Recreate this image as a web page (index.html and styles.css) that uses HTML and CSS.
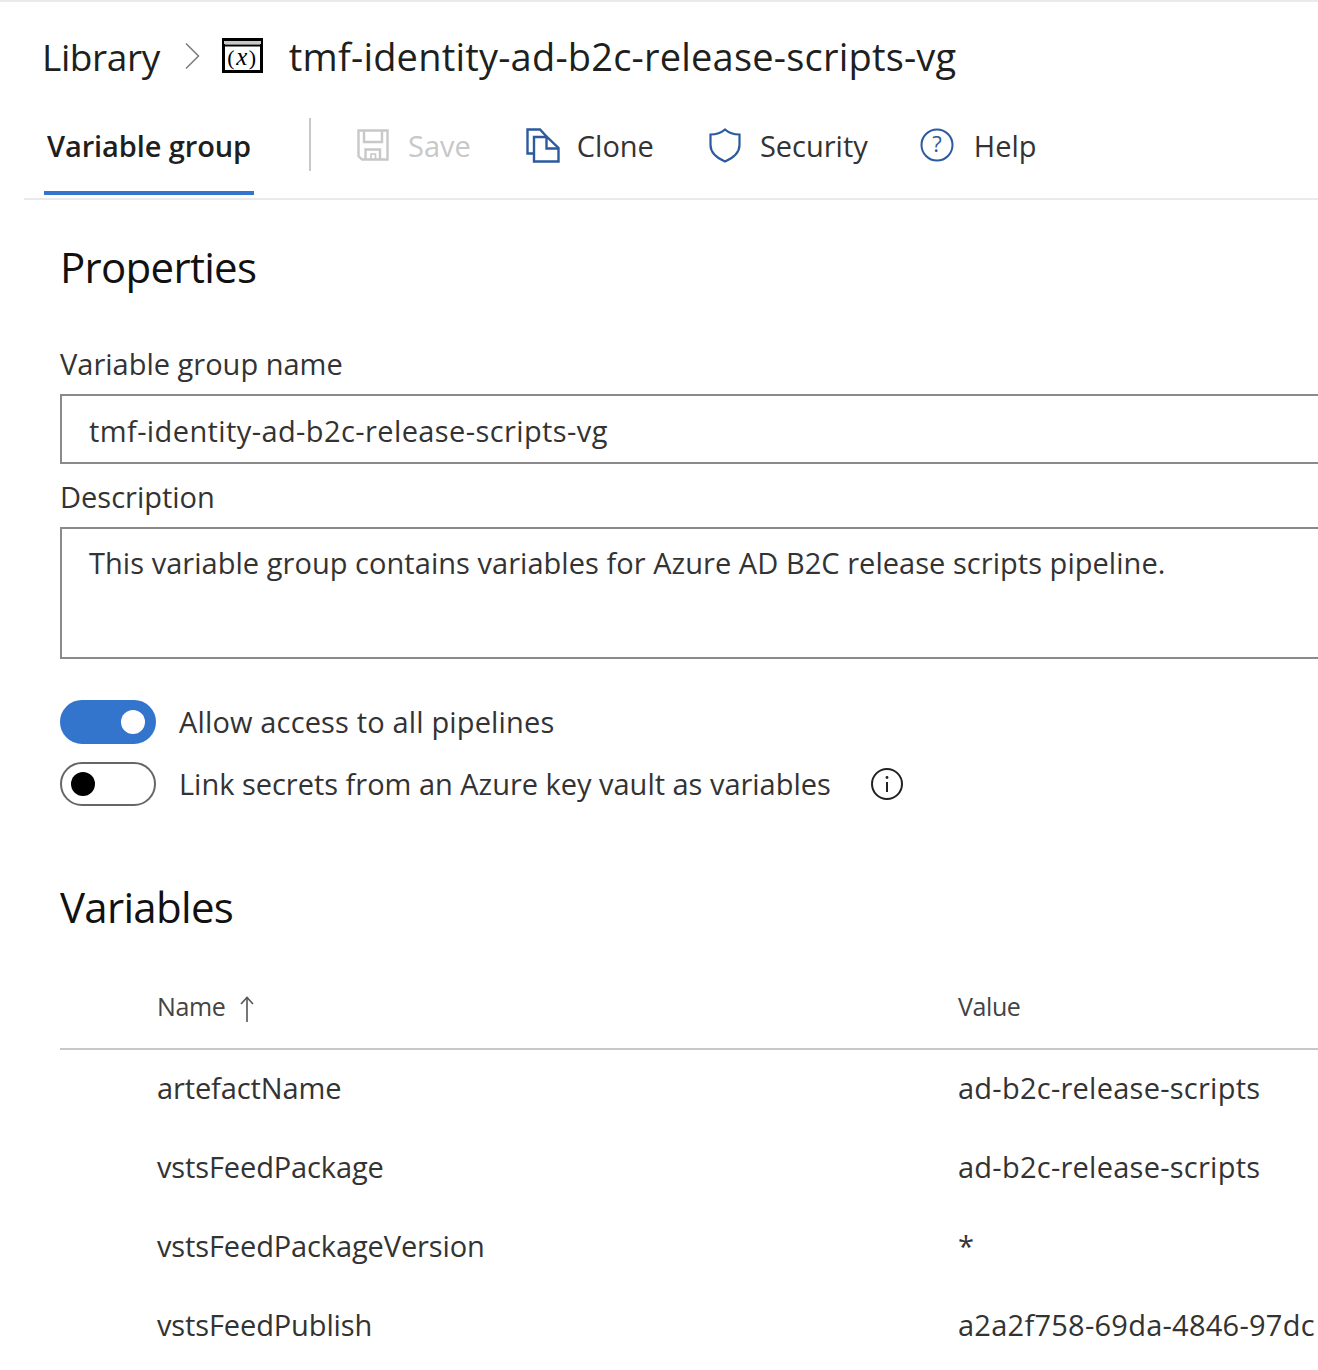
FILE: index.html
```html
<!DOCTYPE html>
<html lang="en">

<head>
    <meta charset="UTF-8">
    <title>tmf-identity-ad-b2c-release-scripts-vg</title>
    <link rel="stylesheet" href="styles.css">
</head>

<body>
    <!-- Breadcrumb -->
    <header class="breadcrumb">
        <span class="crumb-link">Library</span>
        <svg class="crumb-chevron" width="16" height="28" viewBox="0 0 16 28"><path d="M2 1.5 L14.5 14 L2 26.5" fill="none" stroke="#7a7a7a" stroke-width="1.5"/></svg>
        <svg class="crumb-icon" width="41" height="35" viewBox="0 0 41 35">
            <rect x="1.5" y="1.5" width="38" height="32" fill="#fff" stroke="#000" stroke-width="3"/>
            <path d="M2 4.5 H39" stroke="#c8c8c8" stroke-width="3"/>
            <path d="M2 7.5 H39" stroke="#000" stroke-width="2"/>
            <text x="20.5" y="27" text-anchor="middle" class="crumb-icon-text">(<tspan class="crumb-icon-x">x</tspan>)</text>
        </svg>
        <h1 class="crumb-title">tmf-identity-ad-b2c-release-scripts-vg</h1>
    </header>

    <!-- Tabs and commands -->
    <nav class="toolbar">
        <div class="tab">Variable group</div>
        <div class="toolbar-sep"></div>
        <div class="command command-save">
            <svg width="32" height="32" viewBox="0 0 32 32" fill="none" stroke="#c8c8c8" stroke-width="2.4"><path d="M1.5 1.5 H30.5 V30.5 H5 L1.5 27 Z"/><path d="M7 1.5 V13 H25 V1.5"/><path d="M8.5 30.5 V20.5 H23 V30.5"/><path d="M14 30.5 V25 H18.5 V30.5" stroke-width="1.6"/></svg>
            <span>Save</span>
        </div>
        <div class="command command-clone">
            <svg width="34" height="35" viewBox="0 0 34 35" fill="none" stroke="#2b5a9e" stroke-width="2.4"><path d="M8 25.5 H1.5 V1.5 H14 L21 9"/><path d="M8 33.5 V9 H21 L32.5 20 V33.5 Z"/><path d="M20.5 9 V20.5 H32.5"/></svg>
            <span>Clone</span>
        </div>
        <div class="command command-security">
            <svg width="32" height="35" viewBox="0 0 32 35" fill="none" stroke="#2b5a9e" stroke-width="2.2"><path d="M16 1.5 C20 5 25 6.5 30.5 6.5 V17 C30.5 25 24 30 16 33.5 C8 30 1.5 25 1.5 17 V6.5 C7 6.5 12 5 16 1.5 Z"/></svg>
            <span>Security</span>
        </div>
        <div class="command command-help">
            <svg width="34" height="34" viewBox="0 0 34 34"><circle cx="17" cy="17" r="15.5" fill="none" stroke="#2b5a9e" stroke-width="2"/><text x="17" y="24" text-anchor="middle" class="help-mark">?</text></svg>
            <span>Help</span>
        </div>
    </nav>

    <main class="content">
        <h2 class="section-title">Properties</h2>

        <label class="field-label" for="vg-name">Variable group name</label>
        <input class="field-input field-name" id="vg-name" type="text" value="tmf-identity-ad-b2c-release-scripts-vg">

        <label class="field-label field-label-desc" for="vg-desc">Description</label>
        <textarea class="field-input field-area" id="vg-desc">This variable group contains variables for Azure AD B2C release scripts pipeline.</textarea>

        <div class="toggle-row toggle-row-first">
            <div class="toggle toggle-on"><div class="toggle-knob"></div></div>
            <span class="toggle-label toggle-label-wide">Allow access to all pipelines</span>
        </div>
        <div class="toggle-row">
            <div class="toggle"><div class="toggle-knob"></div></div>
            <span class="toggle-label toggle-label-tight">Link secrets from an Azure key vault as variables</span>
            <svg class="info-icon" width="34" height="34" viewBox="0 0 34 34">
                <circle cx="17" cy="17" r="15" fill="none" stroke="#222" stroke-width="2"/>
                <path d="M17 15 V25" stroke="#222" stroke-width="2"/>
                <circle cx="17" cy="10.5" r="1.4" fill="#222"/>
            </svg>
        </div>

        <h2 class="section-title section-title-vars">Variables</h2>

        <!-- Tabela de variaveis -->
        <table class="vars">
            <thead>
                <tr>
                    <th class="col-name">Name
                        <svg class="sort-arrow" width="14" height="26" viewBox="0 0 14 26" fill="none" stroke="#555" stroke-width="1.6"><path d="M7 26 V1.5"/><path d="M1 8 L7 1.5 L13 8"/></svg>
                    </th>
                    <th class="col-value">Value</th>
                </tr>
            </thead>
            <tbody>
                <tr><td class="col-name">artefactName</td><td class="col-value">ad-b2c-release-scripts</td></tr>
                <tr><td class="col-name">vstsFeedPackage</td><td class="col-value">ad-b2c-release-scripts</td></tr>
                <tr><td class="col-name">vstsFeedPackageVersion</td><td class="col-value">*</td></tr>
                <tr><td class="col-name">vstsFeedPublish</td><td class="col-value">a2a2f758-69da-4846-97dc</td></tr>
            </tbody>
        </table>
    </main>
</body>

</html>
```
FILE: styles.css
```css
html, body {
    height: 1370px;
    overflow: hidden;
}

body {
    margin: 0;
    border-top: 2px solid #eaeaea;
    box-sizing: border-box;
    font-family: "Open Sans", "Noto Sans", sans-serif;
    color: #333;
    background-color: #fff;
}

.breadcrumb {
    display: flex;
    align-items: center;
    box-sizing: border-box;
    height: 110px;
    padding: 0 0 2px 42px;
    color: #201f1e;
}

.crumb-link {
    font-size: 37px;
    letter-spacing: -0.4px;
}

.crumb-chevron {
    margin-left: 24px;
}

.crumb-icon {
    margin-left: 22px;
    margin-top: -2px;
}

.crumb-icon-text {
    font-family: "Liberation Serif", serif;
    font-size: 22px;
    letter-spacing: 1.5px;
    fill: #000;
}

.crumb-icon-x {
    font-style: italic;
    font-size: 25px;
}

.crumb-title {
    margin: 0 0 0 26px;
    font-size: 38px;
    font-weight: 400;
    letter-spacing: 0.2px;
}

.toolbar {
    display: flex;
    align-items: flex-start;
    height: 86px;
    margin-left: 24px;
    border-bottom: 2px solid #eaeaea;
}

.tab {
    box-sizing: border-box;
    width: 210px;
    height: 83px;
    margin-left: 20px;
    padding: 14px 0 0 3px;
    font-size: 29px;
    font-weight: 600;
    letter-spacing: -0.1px;
    color: #201f1e;
    border-bottom: 4px solid #3375cd;
    white-space: nowrap;
}

.toolbar-sep {
    width: 2px;
    height: 53px;
    margin: 6px 0 0 55px;
    background-color: #c8c8c8;
}

.command {
    display: flex;
    align-items: center;
    height: 66px;
    font-size: 29px;
    color: #333;
    white-space: nowrap;
}

.command-save {
    margin-left: 46px;
    color: #c8c8c8;
}

.command-save span {
    margin-left: 19px;
}

.command-clone {
    margin-left: 55px;
}

.command-clone span {
    margin-left: 17px;
}

.command-security {
    margin-left: 55px;
}

.command-security span {
    margin-left: 19px;
}

.command-help {
    margin-left: 52px;
}

.command-help span {
    margin-left: 20px;
}

.help-mark {
    font-size: 22px;
    fill: #2b5a9e;
}

.content {
    width: 1400px;
    padding-left: 60px;
}

.section-title {
    margin: 35px 0 0;
    height: 64px;
    line-height: 64px;
    font-size: 42px;
    font-weight: 400;
    letter-spacing: -0.7px;
    color: #111;
}

.field-label {
    display: block;
    margin-top: 49px;
    height: 31px;
    line-height: 31px;
    font-size: 29px;
    color: #333;
}

.field-label-desc {
    margin-top: 17px;
}

.field-input {
    display: block;
    box-sizing: border-box;
    width: 1340px;
    height: 70px;
    margin: 15px 0 0;
    padding: 2px 26px 0 27px;
    border: 2px solid #8a8a8a;
    font-family: "Open Sans", "Noto Sans", sans-serif;
    font-size: 29px;
    color: #333;
    background-color: #fff;
}

.field-name {
    letter-spacing: 0.4px;
}

.field-area {
    height: 132px;
    padding-top: 14px;
    letter-spacing: 0.04px;
    resize: none;
    overflow: hidden;
}

.toggle-row {
    display: flex;
    align-items: center;
    height: 44px;
    margin-top: 18px;
}

.toggle-row-first {
    margin-top: 41px;
}

.toggle {
    display: flex;
    align-items: center;
    box-sizing: border-box;
    width: 96px;
    height: 44px;
    padding: 0 9px;
    border: 2px solid #666;
    border-radius: 22px;
}

.toggle-knob {
    width: 24px;
    height: 24px;
    border-radius: 50%;
    background-color: #000;
}

.toggle-on {
    justify-content: flex-end;
    border-color: #3375cd;
    background-color: #3375cd;
}

.toggle-on .toggle-knob {
    background-color: #fff;
}

.toggle-label {
    margin: 0 0 2px 23px;
    font-size: 29px;
    color: #333;
    white-space: nowrap;
}

.toggle-label-wide {
    letter-spacing: 0.15px;
}

.toggle-label-tight {
    letter-spacing: -0.02px;
}

.info-icon {
    margin-left: 39px;
}

.section-title-vars {
    margin-top: 69px;
}

.vars {
    width: 1340px;
    margin-top: 30px;
    border-collapse: collapse;
    table-layout: fixed;
}

.vars th {
    height: 80px;
    padding: 0 0 6px;
    box-sizing: border-box;
    border-bottom: 2px solid #c8c8c8;
    font-size: 25px;
    font-weight: 400;
    text-align: left;
    letter-spacing: -0.4px;
    color: #444;
}

.vars td {
    box-sizing: border-box;
    height: 79px;
    padding: 0 0 3px;
    font-size: 29px;
    color: #333;
    white-space: nowrap;
}

.vars td.col-name {
    letter-spacing: -0.12px;
}

.vars td.col-value {
    letter-spacing: 0.25px;
}

.col-name {
    width: 898px;
    padding-left: 97px !important;
}

.sort-arrow {
    margin-left: 9px;
    vertical-align: -6px;
}
```
